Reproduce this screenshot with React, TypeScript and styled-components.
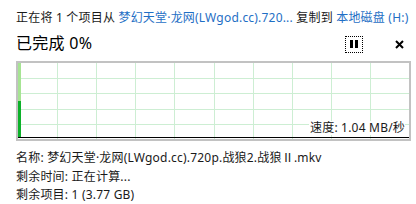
import React from 'react';
import styled, { createGlobalStyle } from 'styled-components';

const GlobalStyle = createGlobalStyle`
  html, body {
    margin: 0;
    padding: 0;
    background: #ffffff;
  }

  body {
    font-family: 'Noto Sans', 'Noto Sans CJK SC', sans-serif;
    color: #000000;
  }
`;

const Window = styled.div`
  width: 416px;
  height: 204px;
  box-sizing: border-box;
  padding: 10px 0 0 16px;
  overflow: hidden;
`;

const StatusLine = styled.div`
  font-size: 12px;
  line-height: 16px;
  height: 16px;
  letter-spacing: 0.2px;
  white-space: nowrap;
  color: #1a1a1a;
`;

const Link = styled.span`
  color: #1f6fc5;
`;

const HeaderRow = styled.div`
  display: flex;
  align-items: center;
  height: 26px;
  margin-top: 4px;
  padding-right: 12px;
`;

const Title = styled.div`
  flex: 1;
  font-size: 16px;
  line-height: 22px;
  letter-spacing: 0.3px;
  color: #000000;
`;

const PauseButton = styled.button`
  width: 18px;
  height: 17px;
  box-sizing: border-box;
  border: 1px dotted #000000;
  background: transparent;
  padding: 0;
  margin: 2px 31px 0 0;
  display: flex;
  align-items: center;
  justify-content: center;
  gap: 2px;
`;

const PauseBar = styled.span`
  width: 3px;
  height: 8px;
  background: #000000;
`;

const CloseButton = styled.div`
  width: 10px;
  height: 10px;
  margin-top: 2px;
  display: flex;
  align-items: center;
  justify-content: center;
`;

const Chart = styled.div`
  position: relative;
  width: 395px;
  height: 80px;
  box-sizing: border-box;
  border: 2px solid #c2c2c2;
  margin-top: 5px;
  background: #ffffff;
`;

const Speed = styled.div`
  position: absolute;
  right: 4px;
  bottom: 4px;
  font-size: 12px;
  line-height: 14px;
  letter-spacing: 0.2px;
  background: #ffffff;
  padding-left: 1px;
  color: #1a1a1a;
`;

const Details = styled.div`
  margin-top: 8px;
  display: flex;
  flex-direction: column;
`;

const DetailLine = styled.div`
  font-size: 12px;
  line-height: 18.5px;
  letter-spacing: 0.2px;
  white-space: nowrap;
  color: #1a1a1a;
`;

const cols = Array.from({ length: 9 }, (_, i) => 39.1 * (i + 1));
const rows = [15, 30, 46, 61];

const Graph: React.FC = () => (
  <svg width={391} height={76} style={{ display: 'block' }}>
    {cols.map((x) => (
      <rect key={`c${x}`} x={Math.round(x)} y={0} width={1} height={76} fill='#cdeed3' />
    ))}
    {rows.map((y) => (
      <rect key={`r${y}`} x={0} y={y} width={391} height={1} fill='#cdeed3' />
    ))}
    <rect x={0} y={0} width={3} height={38} fill='#a6e493' />
    <rect x={0} y={38} width={3} height={37} fill='#0cb12a' />
    <rect x={0} y={74} width={391} height={1} fill='#000000' />
  </svg>
);

const App: React.FC = () => (
  <>
    <GlobalStyle />
    <Window>
      <StatusLine>
        正在将 1 个项目从 <Link>梦幻天堂·龙网(LWgod.cc).720...</Link> 复制到 <Link>本地磁盘 (H:)</Link>
      </StatusLine>
      <HeaderRow>
        <Title>已完成 0%</Title>
        <PauseButton aria-label='pause'>
          <PauseBar />
          <PauseBar />
        </PauseButton>
        <CloseButton>
          <svg width={9} height={9} viewBox='0 0 9 9'>
            <path d='M1 1 L8 8 M8 1 L1 8' stroke='#000' strokeWidth={2} />
          </svg>
        </CloseButton>
      </HeaderRow>
      <Chart>
        <Graph />
        <Speed>速度: 1.04 MB/秒</Speed>
      </Chart>
      <Details>
        <DetailLine>名称: 梦幻天堂·龙网(LWgod.cc).720p.战狼2.战狼Ⅱ.mkv</DetailLine>
        <DetailLine>剩余时间: 正在计算...</DetailLine>
        <DetailLine>剩余项目: 1 (3.77 GB)</DetailLine>
      </Details>
    </Window>
  </>
);

export default App;
